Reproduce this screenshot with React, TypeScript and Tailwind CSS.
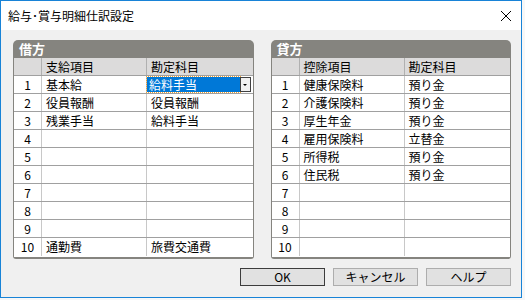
import { ReactNode } from "react";

type Row = { item: string; account: string };

const debitRows: Row[] = [
  { item: "基本給", account: "給料手当" },
  { item: "役員報酬", account: "役員報酬" },
  { item: "残業手当", account: "給料手当" },
  { item: "", account: "" },
  { item: "", account: "" },
  { item: "", account: "" },
  { item: "", account: "" },
  { item: "", account: "" },
  { item: "", account: "" },
  { item: "通勤費", account: "旅費交通費" },
];

const creditRows: Row[] = [
  { item: "健康保険料", account: "預り金" },
  { item: "介護保険料", account: "預り金" },
  { item: "厚生年金", account: "預り金" },
  { item: "雇用保険料", account: "立替金" },
  { item: "所得税", account: "預り金" },
  { item: "住民税", account: "預り金" },
  { item: "", account: "" },
  { item: "", account: "" },
  { item: "", account: "" },
  { item: "", account: "" },
];

function SelectedCell({ value }: { value: string }) {
  return (
    <div className="flex items-center h-full pr-[2px]">
      <div className="flex-1 h-[15px] bg-[#0078d7] text-white pl-[2px] leading-[15px] outline outline-1 outline-dotted outline-[#f0a030]">
        {value}
      </div>
      <div className="w-[11px] h-[15px] bg-[#f0f0f0] border border-[#404040] flex items-center justify-center">
        <span className="block w-0 h-0 border-l-[2px] border-r-[2px] border-t-[2px] border-l-transparent border-r-transparent border-t-black" />
      </div>
    </div>
  );
}

function Panel({ title, col1, rows, selected }: { title: string; col1: string; rows: Row[]; selected?: boolean }) {
  return (
    <div className="w-[241px] h-[219px] bg-[#85847f] rounded-t-[5px] rounded-b-[3px] px-[1px] pb-[2px] flex flex-col">
      <div className="h-[18px] pl-[5px] text-white font-bold text-[13px] leading-[18px]">{title}</div>
      <div className="flex-1 bg-white">
        <div className="grid grid-cols-[28px_105px_1fr] h-[18px] bg-[#dcdbdb] border-b border-[#a0a0a0]">
          <div className="border-r border-[#b0b0b0]" />
          <div className="border-r border-[#b0b0b0] pl-[4px] leading-[17px]">{col1}</div>
          <div className="pl-[4px] leading-[17px]">勘定科目</div>
        </div>
        {rows.map((r, i) => (
          <div key={i} className="grid grid-cols-[28px_105px_1fr] h-[18px] border-b border-[#a0a0a0] last:border-b-0">
            <div className="border-r border-[#c8c8c8] text-center leading-[17px]">{i + 1}</div>
            <div className="border-r border-[#c8c8c8] pl-[4px] leading-[17px]">{r.item}</div>
            {selected && i === 0 ? (
              <SelectedCell value={r.account} />
            ) : (
              <div className="pl-[4px] leading-[17px]">{r.account}</div>
            )}
          </div>
        ))}
      </div>
    </div>
  );
}

function Btn({ children, primary }: { children: ReactNode; primary?: boolean }) {
  return (
    <button
      className={
        "w-[85px] h-[18px] bg-[#e1e1e1] text-[12px] leading-[16px] " +
        (primary ? "border border-[#3c3c3c]" : "border border-[#adadad]")
      }
    >
      {children}
    </button>
  );
}

export default function App() {
  return (
    <div className="w-[525px] h-[300px] bg-[#f7f7f7] text-[12px] text-black" style={{ fontFamily: '"Noto Sans CJK JP", "Liberation Sans", sans-serif' }}>
      <div className="w-[522px] h-[298px] border border-[#1883d7] flex flex-col">
        {/* Title bar */}
        <div className="h-[29px] bg-white flex items-center justify-between pl-[7px] pr-[6px]">
          <span className="text-[12px]">給与･賞与明細仕訳設定</span>
          <svg width="12" height="12" viewBox="0 0 12 12" className="mr-[3px]">
            <path d="M1 1 L11 11 M11 1 L1 11" stroke="#000" strokeWidth="1" />
          </svg>
        </div>

        {/* Body */}
        <div className="flex-1 bg-[#f0f0f0] pt-[10px] pl-[12px] pr-[10px] flex flex-col">
          <div className="flex gap-[17px]">
            <Panel title="借方" col1="支給項目" rows={debitRows} selected />
            <Panel title="貸方" col1="控除項目" rows={creditRows} />
          </div>
          <div className="flex justify-end gap-[8px] mt-[9px]">
            <Btn primary>OK</Btn>
            <Btn>キャンセル</Btn>
            <Btn>ヘルプ</Btn>
          </div>
        </div>
      </div>
    </div>
  );
}
